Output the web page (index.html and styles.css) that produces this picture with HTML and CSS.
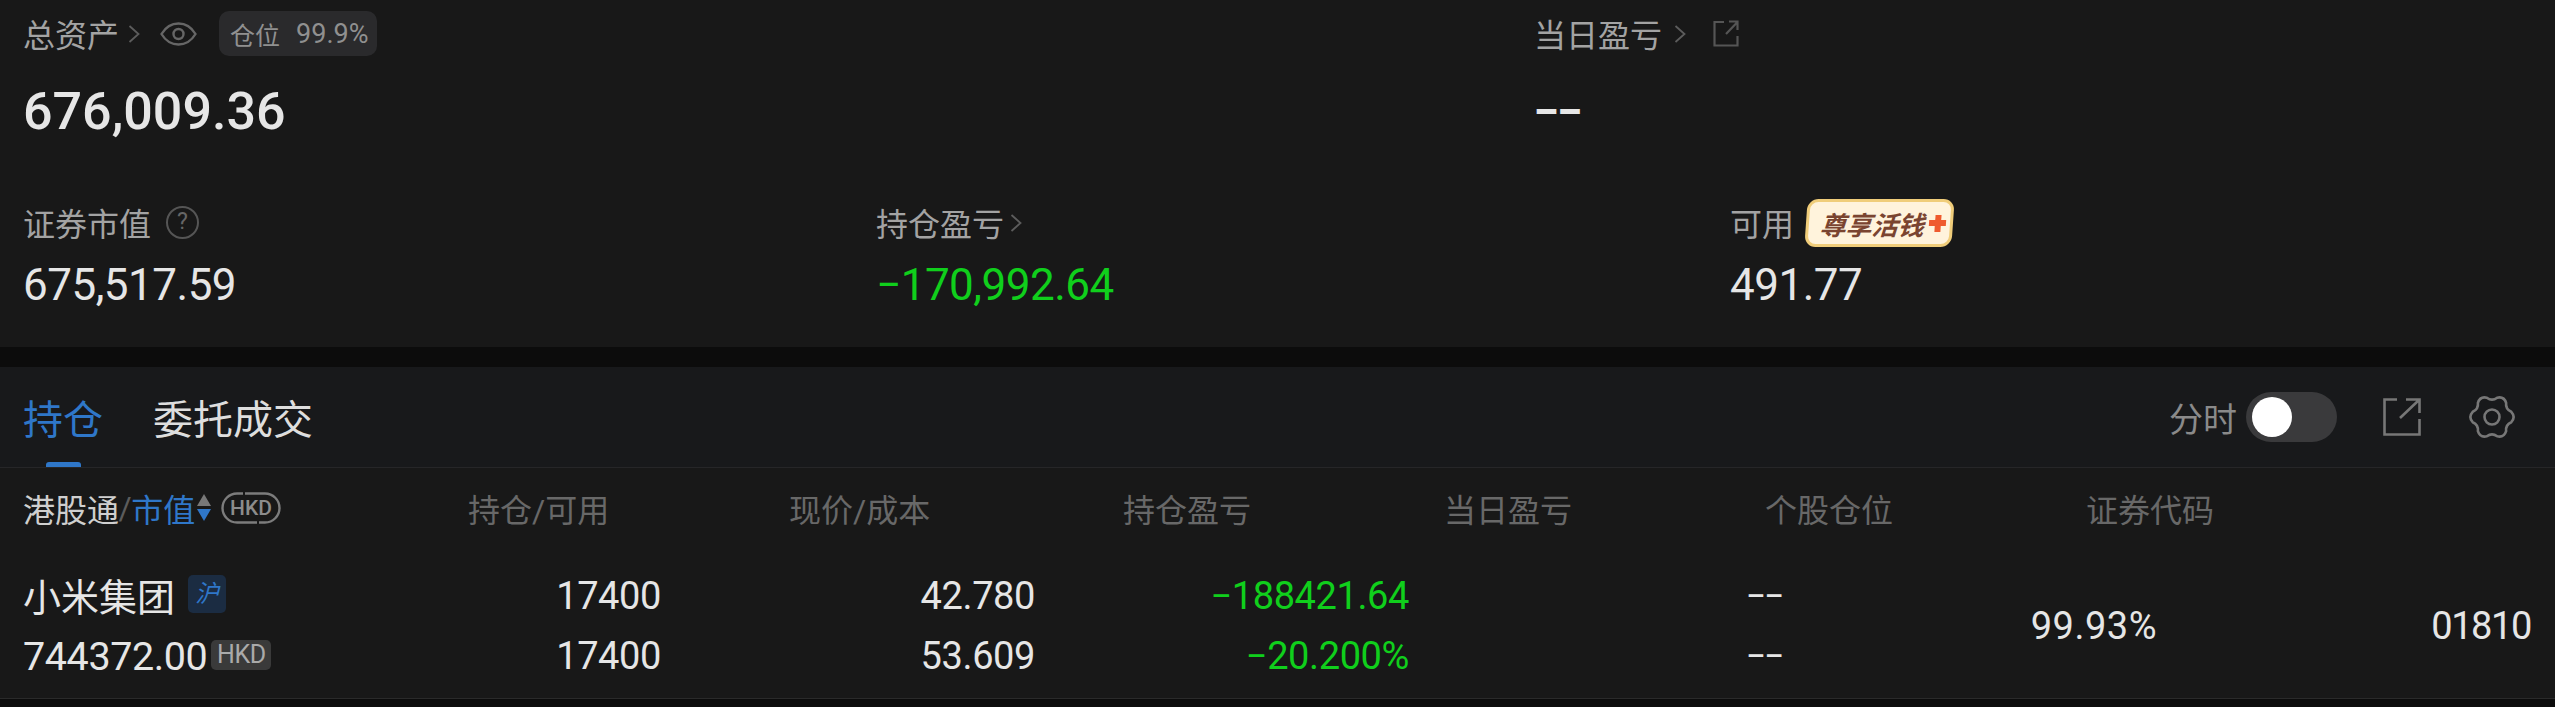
FILE: index.html
```html
<!DOCTYPE html>
<html lang="zh-CN">
<head>
    <meta charset="UTF-8">
    <title>持仓</title>
    <link rel="stylesheet" href="styles.css">
</head>
<body>
    <section class="summary">
        <div class="summary-top">
            <div class="stat">
                <div class="stat-label">
                    <span class="label-text">总资产</span>
                    <svg class="chevron" viewBox="0 0 12 18"><path d="M1.5 1 L10.5 9 L1.5 17"/></svg>
                    <svg class="eye" viewBox="0 0 37 24"><path d="M1.5 12 C6 4.5 12 1.5 18.5 1.5 C25 1.5 31 4.5 35.5 12 C31 19.5 25 22.5 18.5 22.5 C12 22.5 6 19.5 1.5 12Z"/><circle cx="18.5" cy="12" r="5"/></svg>
                    <div class="position-pill"><span class="pill-name">仓位</span><span class="pill-value">99.9%</span></div>
                </div>
                <div class="stat-total">676,009.36</div>
            </div>
            <div class="stat">
                <div class="stat-label">
                    <span class="label-text">当日盈亏</span>
                    <svg class="chevron chevron-wide" viewBox="0 0 12 18"><path d="M1.5 1 L10.5 9 L1.5 17"/></svg>
                    <svg class="share-small" viewBox="0 0 26 27"><path d="M11 2 H1.5 V25.5 H24.5 V16"/><path d="M13 14 L24 2.5 M16 1.5 H24.5 V10"/></svg>
                </div>
                <div class="stat-total dashes">––</div>
            </div>
        </div>
        <div class="summary-bottom">
            <div class="stat">
                <div class="stat-label">
                    <span class="label-text">证券市值</span>
                    <span class="help">?</span>
                </div>
                <div class="stat-value">675,517.59</div>
            </div>
            <div class="stat">
                <div class="stat-label">
                    <span class="label-text">持仓盈亏</span>
                    <svg class="chevron chevron-tight" viewBox="0 0 12 18"><path d="M1.5 1 L10.5 9 L1.5 17"/></svg>
                </div>
                <div class="stat-value loss">−170,992.64</div>
            </div>
            <div class="stat">
                <div class="stat-label">
                    <span class="label-text">可用</span>
                    <div class="promo"><span class="promo-text">尊享活钱</span><span class="promo-plus"></span></div>
                </div>
                <div class="stat-value">491.77</div>
            </div>
        </div>
    </section>

    <div class="band"></div>

    <section class="holdings">
        <div class="tabs-bar">
            <div class="tab active">持仓</div>
            <div class="tab">委托成交</div>
            <div class="tools">
                <span class="tools-label">分时</span>
                <div class="toggle"><div class="knob"></div></div>
                <svg class="tool-share" viewBox="0 0 38 38"><path d="M14 1.5 H1.5 V36.5 H36.5 V21"/><path d="M17 20 L36 2 M23 1.5 H36.5 V15"/></svg>
                <svg class="tool-gear" viewBox="0 0 46 44"><path d="M42.3 16.8 Q47 22 42.3 27.2 Q36.4 29.75 37.1 36.1 Q35 42.8 28.2 41.3 Q23 37.5 17.8 41.3 Q11 42.8 8.9 36.1 Q9.6 29.75 3.7 27.2 Q-1 22 3.7 16.8 Q9.6 14.25 8.9 7.9 Q11 1.2 17.8 2.7 Q23 6.5 28.2 2.7 Q35 1.2 37.1 7.9 Q36.4 14.25 42.3 16.8Z"/><circle cx="23" cy="22" r="7.5"/></svg>
            </div>
        </div>

        <div class="table-head">
            <div class="head-name">
                <span class="head-main">港股通</span><span class="head-slash">/</span><span class="head-sort">市值</span>
                <div class="sort-arrows"><span class="arrow-up"></span><span class="arrow-down"></span></div>
                <svg class="hkd-pill" viewBox="0 0 60 32"><path d="M22 1.5 H16 A14.5 14.5 0 0 0 16 30.5 H36"/><path d="M24 1.5 H44 A14.5 14.5 0 0 1 44 30.5 H38"/><text x="30" y="22.5" text-anchor="middle">HKD</text></svg>
            </div>
            <div>持仓/可用</div>
            <div>现价/成本</div>
            <div>持仓盈亏</div>
            <div>当日盈亏</div>
            <div>个股仓位</div>
            <div>证券代码</div>
        </div>

        <div class="table-row">
            <div class="cell-name">
                <div class="name-line name-title">小米集团<span class="tag-market">沪</span></div>
                <div class="name-line name-value">744372.00<span class="tag-currency">HKD</span></div>
            </div>
            <div class="cell"><div>17400</div><div>17400</div></div>
            <div class="cell"><div>42.780</div><div>53.609</div></div>
            <div class="cell loss"><div>−188421.64</div><div>−20.200%</div></div>
            <div class="cell dash-cell"><div>––</div><div>––</div></div>
            <div class="cell single percent">99.93%</div>
            <div class="cell single code">01810</div>
        </div>
    </section>
</body>
</html>
```

FILE: styles.css
```css
* {
    box-sizing: border-box;
}
html, body {
    margin: 0;
    height: 707px;
    overflow: hidden;
}
body {
    background-color: #0c0c0c;
    color: #e6e6e6;
    font-family: Roboto, "Noto Sans CJK SC", sans-serif;
}
svg {
    display: block;
    fill: none;
    flex: none;
    overflow: visible;
}

/* top summary */
.summary {
    background-color: #181818;
    height: 347px;
    padding-left: 23px;
}
.summary-top {
    display: grid;
    grid-template-columns: 1511px 1fr;
    height: 200px;
    padding-top: 11px;
}
.summary-bottom {
    display: grid;
    grid-template-columns: 853px 854px 1fr;
}
.stat-label {
    display: flex;
    align-items: center;
    height: 45px;
    font-size: 32px;
    color: #a3a3a3;
}
.label-text {
    margin-top: -2px;
}
.stat-total {
    margin-top: 30px;
    height: 52px;
    line-height: 52px;
    font-size: 52px;
    font-weight: 500;
}
.dashes {
    font-size: 38px;
    font-weight: 900;
}
.stat-value {
    margin-top: 18px;
    height: 44px;
    line-height: 44px;
    font-size: 44px;
    letter-spacing: -0.5px;
}
.loss {
    color: #10cf1c;
}
.chevron {
    width: 12px;
    height: 18px;
    margin-left: 9px;
    stroke: #5c5c5c;
    stroke-width: 1.8;
}
.chevron-wide {
    margin-left: 12px;
}
.chevron-tight {
    margin-left: 6px;
}
.eye {
    width: 37px;
    height: 24px;
    margin-left: 20px;
    stroke: #666;
    stroke-width: 2.4;
}
.share-small {
    width: 26px;
    height: 27px;
    margin-left: 27px;
    stroke: #555;
    stroke-width: 2.2;
}
.position-pill {
    display: flex;
    align-items: center;
    width: 158px;
    height: 45px;
    margin-left: 22px;
    padding: 1px 0 0 11px;
    background-color: #2a2a2c;
    border-radius: 10px;
    color: #909090;
}
.pill-name {
    font-size: 25px;
}
.pill-value {
    margin-left: 16px;
    font-size: 27px;
}
.help {
    width: 33px;
    height: 33px;
    margin-left: 15px;
    border: 2.5px solid #555;
    border-radius: 50%;
    color: #666;
    font-size: 23px;
    line-height: 28px;
    text-align: center;
}
.promo {
    display: flex;
    align-items: center;
    width: 147px;
    height: 48px;
    margin-left: 12px;
    padding-left: 11px;
    background-color: #fff3dc;
    border: 3px solid #f0cd7a;
    border-radius: 11px;
    transform: skewX(-4deg);
}
.promo-text {
    font-size: 26px;
    font-weight: 700;
    font-style: italic;
    color: #7a4430;
    white-space: nowrap;
}
.promo-plus {
    width: 17px;
    height: 17px;
    margin-left: 5px;
    background:
        linear-gradient(#ef5a2e, #ef5a2e) center / 6px 17px no-repeat,
        linear-gradient(#ef5a2e, #ef5a2e) center / 17px 6px no-repeat;
}

.band {
    height: 20px;
    background-color: #0c0c0c;
}

/* holdings panel */
.holdings {
    height: 332px;
    background-color: #181818;
    border-bottom: 1px solid #2a2a2a;
}
.tabs-bar {
    display: flex;
    align-items: center;
    height: 101px;
    padding: 0 40px 0 23px;
    background-color: #18191b;
    border-bottom: 1px solid #262628;
}
.tab {
    margin-right: 50px;
    font-size: 40px;
    color: #dedede;
}
.tab.active {
    position: relative;
    align-self: stretch;
    display: flex;
    align-items: center;
    color: #2f77c9;
}
.tab.active::after {
    content: "";
    position: absolute;
    left: 23px;
    bottom: 0;
    width: 35px;
    height: 5px;
    background-color: #2f77c9;
    border-radius: 3px 3px 0 0;
}
.tools {
    display: flex;
    align-items: center;
    margin-left: auto;
}
.tools-label {
    font-size: 34px;
    color: #8a8a8a;
}
.toggle {
    width: 91px;
    height: 50px;
    margin-left: 9px;
    padding: 5px 6px;
    background-color: #3a3a3c;
    border-radius: 25px;
}
.knob {
    width: 40px;
    height: 40px;
    background-color: #fff;
    border-radius: 50%;
}
.tool-share {
    width: 38px;
    height: 38px;
    margin-left: 46px;
    stroke: #777;
    stroke-width: 2.6;
}
.tool-gear {
    width: 46px;
    height: 44px;
    margin-left: 48px;
    stroke: #777;
    stroke-width: 2.6;
}

.table-head {
    display: grid;
    grid-template-columns: 445px 321px 334px 321px 321px 321px 1fr;
    align-items: center;
    height: 84px;
    padding: 0 0 5px 23px;
    font-size: 32px;
    color: #686868;
}
.head-name {
    display: flex;
    align-items: center;
}
.head-main {
    color: #cfcfcf;
}
.head-slash {
    margin: 0 -0.5px;
    color: #5c5c5c;
}
.head-sort {
    color: #2f77c9;
}
.sort-arrows {
    display: flex;
    flex-direction: column;
    gap: 3px;
    margin-left: 2px;
}
.arrow-up {
    border: 7.5px solid transparent;
    border-top: 0;
    border-bottom: 12px solid #787878;
}
.arrow-down {
    border: 7.5px solid transparent;
    border-bottom: 0;
    border-top: 12px solid #2f77c9;
}
.hkd-pill {
    width: 60px;
    height: 32px;
    margin-left: 10px;
    stroke: #7c7c7c;
    stroke-width: 2.4;
}
.hkd-pill text {
    fill: #8c8c8c;
    stroke: none;
    font-size: 21px;
    font-weight: 500;
}

.table-row {
    display: grid;
    grid-template-columns: 264px repeat(6, 374px);
    height: 146px;
    padding-left: 23px;
    font-size: 38px;
    letter-spacing: -0.4px;
}
.cell-name {
    display: flex;
    flex-direction: column;
    padding-top: 14px;
}
.name-line {
    display: flex;
    align-items: center;
    height: 60px;
    white-space: nowrap;
}
.name-title {
    margin-top: -2px;
    margin-bottom: 2px;
    letter-spacing: 0;
}
.name-value {
    font-size: 39.5px;
}
.cell {
    padding-top: 14px;
}
.cell > div {
    height: 60px;
    line-height: 60px;
    text-align: right;
}
.cell.single {
    height: 120px;
    padding-top: 14px;
    line-height: 120px;
    text-align: right;
}
.cell.percent {
    letter-spacing: 0.5px;
}
.cell.code {
    letter-spacing: -1.4px;
}
.dash-cell {
    font-size: 29px;
    font-weight: 500;
}
.tag-market {
    width: 38px;
    height: 38px;
    margin-left: 13px;
    background-color: #1b2c42;
    border-radius: 5px;
    color: #2f77c9;
    font-size: 24px;
    font-style: italic;
    line-height: 38px;
    text-align: center;
}
.tag-currency {
    width: 60px;
    height: 30px;
    margin: -2px 0 0 4px;
    background-color: #3a3a3a;
    border-radius: 5px;
    color: #aaa;
    font-size: 25px;
    line-height: 30px;
    text-align: center;
}
```
